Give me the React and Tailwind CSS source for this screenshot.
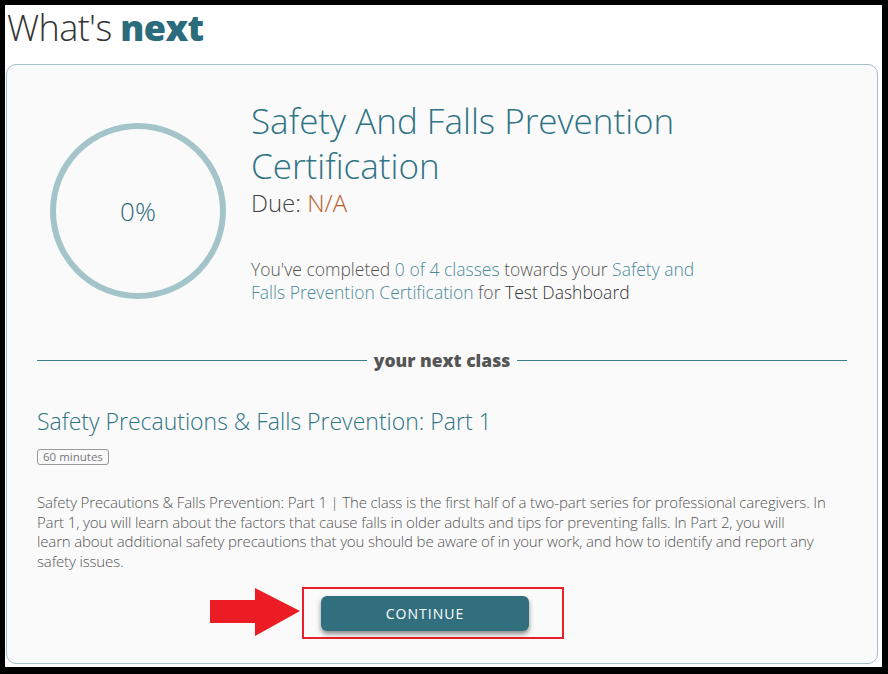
import React from 'react';

const font = { fontFamily: '"Open Sans", "Noto Sans", sans-serif' };

const ProgressRing = ({ percent }) => (
  <div className="relative w-[176px] h-[176px] shrink-0">
    <svg width="176" height="176" viewBox="0 0 176 176" className="absolute inset-0">
      <circle cx="88" cy="88" r="85" fill="none" stroke="#a3c4c9" strokeWidth="6" />
    </svg>
    <div className="absolute inset-0 flex items-center justify-center text-[26px] font-light text-[#2a6b7c]">
      {percent}%
    </div>
  </div>
);

const Arrow = () => (
  <svg width="92" height="50" viewBox="0 0 92 50" className="shrink-0">
    <polygon points="0,12 45,12 45,0 90,23 45,48 45,35 0,35" fill="#ec1c24" />
  </svg>
);

export default function App() {
  return (
    <div className="bg-black w-[888px] h-[674px] pt-[5px] pl-[5px] pr-[6px] pb-[7px] overflow-hidden" style={font}>
      <div className="bg-white w-full h-full flex flex-col">
        {/* Heading */}
        <h1 className="h-[59px] pl-[2px] pt-[1px] text-[36px] leading-[44px] text-[#333] font-light tracking-[-0.6px]">
          What's <span className="font-extrabold text-[#2a6b7c]">next</span>
        </h1>

        {/* Card */}
        <div className="ml-[1px] w-[872px] h-[600px] rounded-[10px] border border-[#9fc1c8] bg-[#fafafa] px-[30px]">
          {/* Certification summary */}
          <div className="flex pt-[31px]">
            <div className="pl-[13px] pt-[27px]">
              <ProgressRing percent={0} />
            </div>
            <div className="ml-[25px] pt-[2px]">
              <h2 className="text-[35px] leading-[45px] font-light text-[#2f7385]">
                Safety And Falls Prevention
                <br />
                Certification
              </h2>
              <p className="text-[24px] leading-[30px] font-light text-[#444]">
                Due: <span className="text-[#b4612a]">N/A</span>
              </p>
              <p className="mt-[40px] whitespace-nowrap text-[17.5px] leading-[23px] font-light text-[#555]">
                You've completed <span className="text-[#4b8b99]">0 of 4 classes</span> towards your{' '}
                <span className="text-[#4b8b99]">Safety and</span>
                <br />
                <span className="text-[#4b8b99]">Falls Prevention Certification</span> for{' '}
                <span className="text-[#333]">Test Dashboard</span>
              </p>
            </div>
          </div>

          {/* Divider */}
          <div className="flex items-center gap-[7px] mt-[45px]">
            <div className="flex-1 h-[1px] bg-[#3d7f8e]" />
            <span className="text-[17.5px] leading-[22px] font-black text-[#555]">your next class</span>
            <div className="flex-1 h-[1px] bg-[#3d7f8e]" />
          </div>

          {/* Next class */}
          <h3 className="mt-[35px] text-[23px] leading-[30px] font-light text-[#2f7385]">
            Safety Precautions &amp; Falls Prevention: Part 1
          </h3>
          <span className="inline-block mt-[13px] px-[5px] rounded-[3px] border border-[#999] text-[11.5px] leading-[14px] text-[#777]">
            60 minutes
          </span>
          <p className="mt-[26px] whitespace-nowrap text-[15px] leading-[19.5px] font-light text-[#555] tracking-[-0.15px]">
            Safety Precautions &amp; Falls Prevention: Part 1 | The class is the first half of a two-part series for professional caregivers. In
            <br />
            Part 1, you will learn about the factors that cause falls in older adults and tips for preventing falls. In Part 2, you will
            <br />
            learn about additional safety precautions that you should be aware of in your work, and how to identify and report any
            <br />
            safety issues.
          </p>

          {/* Action */}
          <div className="flex items-center mt-[16px] ml-[173px]">
            <Arrow />
            <div className="border-2 border-[#e8202a] w-[262px] h-[52px] flex items-center pl-[17px]">
              <button className="w-[208px] h-[35px] rounded-[6px] bg-[#326f7e] text-white text-[14px] tracking-[1px] shadow-[0_3px_5px_rgba(0,0,0,0.45)]">
                CONTINUE
              </button>
            </div>
          </div>
        </div>
      </div>
    </div>
  );
}
